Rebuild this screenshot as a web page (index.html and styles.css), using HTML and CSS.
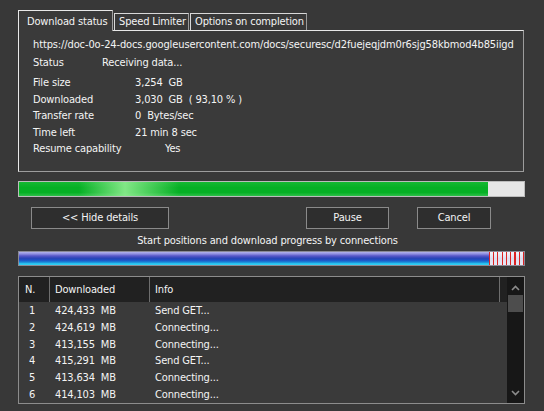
FILE: index.html
```html
<!DOCTYPE html>
<html>
<head>
<meta charset="utf-8">
<link rel="stylesheet" href="styles.css">
</head>
<body>
<div class="win">
  <div class="tabs">
    <div class="tab active">Download status</div>
    <div class="tab">Speed Limiter</div>
    <div class="tab">Options on completion</div>
  </div>
  <div class="panel">
    <div class="url">https://doc-0o-24-docs.googleusercontent.com/docs/securesc/d2fuejeqjdm0r6sjg58kbmod4b85iigd</div>
    <div class="row status"><span class="lbl ls">Status</span><span>Receiving data...</span></div>
    <div class="info">
      <div class="row"><span class="lbl">File size</span><span>3,254&nbsp; GB</span></div>
      <div class="row"><span class="lbl">Downloaded</span><span>3,030&nbsp; GB&nbsp; ( 93,10 % )</span></div>
      <div class="row"><span class="lbl">Transfer rate</span><span>0&nbsp; Bytes/sec</span></div>
      <div class="row"><span class="lbl">Time left</span><span>21 min 8 sec</span></div>
      <div class="row"><span class="lbl lr">Resume capability</span><span>Yes</span></div>
    </div>
  </div>
  <div class="progress"><div class="fill" style="width:469px"></div></div>
  <div class="buttons">
    <div class="btn b-hide">&lt;&lt; Hide details</div>
    <div class="btn b-pause">Pause</div>
    <div class="btn b-cancel">Cancel</div>
  </div>
  <div class="caption">Start positions and download progress by connections</div>
  <div class="conn"><div class="conn-done"></div><div class="conn-rest"></div></div>
  <div class="table">
    <div class="tmain">
      <div class="thead">
        <div class="c1">N.</div><div class="c2">Downloaded</div><div class="c3">Info</div><div class="c4"></div>
      </div>
      <div class="trow"><div class="c1">1</div><div class="c2">424,433&nbsp; MB</div><div class="c3">Send GET...</div></div>
      <div class="trow"><div class="c1">2</div><div class="c2">424,619&nbsp; MB</div><div class="c3">Connecting...</div></div>
      <div class="trow"><div class="c1">3</div><div class="c2">413,155&nbsp; MB</div><div class="c3">Connecting...</div></div>
      <div class="trow"><div class="c1">4</div><div class="c2">415,291&nbsp; MB</div><div class="c3">Send GET...</div></div>
      <div class="trow"><div class="c1">5</div><div class="c2">413,634&nbsp; MB</div><div class="c3">Connecting...</div></div>
      <div class="trow"><div class="c1">6</div><div class="c2">414,103&nbsp; MB</div><div class="c3">Connecting...</div></div>
    </div>
    <div class="sbar">
      <svg class="arr" width="17" height="12" viewBox="0 0 17 12"><path d="M5 8 L8.5 4.5 L12 8" fill="none" stroke="#8c8c8c" stroke-width="1.6"/></svg>
      <div class="thumb"></div>
      <div class="strack"></div>
      <svg class="arr" width="17" height="12" viewBox="0 0 17 12"><path d="M5 4 L8.5 7.5 L12 4" fill="none" stroke="#8c8c8c" stroke-width="1.6"/></svg>
    </div>
  </div>
</div>
</body>
</html>
```

FILE: styles.css
```css
html, body {
  margin: 0;
  padding: 0;
  background: #383838;
}
body {
  font-family: "DejaVu Sans Condensed", "DejaVu Sans", sans-serif;
  font-size: 11px;
  letter-spacing: -0.15px;
  color: #f4f4f4;
}
.win {
  width: 544px;
  height: 411px;
  overflow: hidden;
  padding-top: 10px;
  box-sizing: border-box;
}
.tabs {
  display: flex;
  align-items: flex-end;
  margin-left: 18px;
  height: 20px;
  position: relative;
  z-index: 1;
}
.tab {
  height: 17px;
  line-height: 16px;
  box-sizing: border-box;
  border: 1px solid #d8d8d8;
  border-right-color: #9a9a9a;
  border-bottom: none;
  padding: 0 4px;
  margin-left: 1px;
  background: #383838;
  white-space: nowrap;
}
.tab.active {
  height: 21px;
  line-height: 21px;
  width: 95px;
  margin-left: 0;
  margin-bottom: -1px;
  padding: 0 8px;
  background: #3a3a3a;
  border-color: #e8e8e8;
  border-right-color: #a0a0a0;
}
.tab:nth-child(2) { width: 75px; }
.tab:nth-child(3) { width: 117px; }
.panel {
  margin-left: 18px;
  width: 506px;
  height: 142px;
  box-sizing: border-box;
  border: 1px solid #e8e8e8;
  border-right-color: #9c9c9c;
  border-bottom-color: #9c9c9c;
  background: #3a3a3a;
  padding: 6px 0 0 14px;
}
.url {
  line-height: 16px;
  white-space: nowrap;
  letter-spacing: -0.12px;
}
.row {
  display: flex;
  white-space: nowrap;
}
.status {
  margin-top: 2px;
  line-height: 16px;
}
.info {
  margin-top: 4px;
}
.info .row {
  line-height: 16.5px;
}
.lbl {
  width: 102px;
  flex: none;
}
.lbl.ls { width: 69px; }
.lbl.lr { width: 132px; }
.progress {
  margin: 9px 0 0 18px;
  width: 507px;
  height: 16px;
  box-sizing: border-box;
  border: 1px solid #bcbcbc;
  background: #e6e6e6;
}
.fill {
  height: 100%;
  background:
    linear-gradient(to right, rgba(140,240,140,0) 60px, rgba(150,240,150,0.85) 106px, rgba(140,240,140,0) 160px),
    linear-gradient(to bottom, #16b832 0%, #06b025 40%, #06b025 75%, #2fc04a 100%);
}
.buttons {
  display: flex;
  margin: 10px 0 0 31px;
  height: 22px;
}
.btn {
  box-sizing: border-box;
  height: 22px;
  line-height: 20px;
  border: 1px solid #8a8a8a;
  background: #2e2e2e;
  text-align: center;
}
.b-hide { width: 138px; }
.b-pause { width: 83px; margin-left: 137px; }
.b-cancel { width: 74px; margin-left: 28px; }
.caption {
  margin: 5px 0 0 18px;
  width: 499px;
  text-align: center;
  line-height: 14px;
  white-space: nowrap;
}
.conn {
  margin: 3px 0 0 18px;
  width: 507px;
  height: 15px;
  box-sizing: border-box;
  border: 1px solid #8a8a96;
  display: flex;
}
.conn-done {
  width: 470px;
  height: 100%;
  background: linear-gradient(to bottom, #b4b4ec 0%, #8a8ade 16%, #5858c8 30%, #2a44b6 48%, #1c50c4 62%, #1a86d8 78%, #2cc6f0 90%, #30d0f2 100%);
}
.conn-rest {
  flex: 1;
  height: 100%;
  background:
    repeating-linear-gradient(to right, #dd2222 0 1px, transparent 1px 4.25px),
    linear-gradient(to bottom, #f4f4fa 0%, #dcdcee 50%, #e8e8f4 100%);
}
.table {
  margin: 10px 0 0 18px;
  width: 507px;
  height: 128px;
  box-sizing: border-box;
  border: 1px solid #8c8c8c;
  display: flex;
  background: #3a3a3a;
}
.tmain {
  flex: 1;
}
.thead {
  display: flex;
  height: 25px;
  line-height: 25px;
  background: #212121;
}
.thead > div {
  box-sizing: border-box;
  border-right: 1px solid #6e6e6e;
}
.thead .c4 { border-right: none; flex: 1; }
.c1 { width: 31px; padding-left: 6px; box-sizing: border-box; flex: none; }
.c2 { width: 100px; padding-left: 5px; box-sizing: border-box; flex: none; }
.c3 { width: 350px; padding-left: 5px; box-sizing: border-box; flex: none; }
.trow {
  display: flex;
  height: 16.8px;
  line-height: 16.8px;
  white-space: nowrap;
}
.thead + .trow { margin-top: 1px; }
.trow .c1 { padding-left: 10px; }
.sbar {
  width: 17px;
  background: #171717;
  display: flex;
  flex-direction: column;
}
.arr { display: block; flex: none; margin-top: 5px; }
.sbar .arr:last-child { margin-top: 0; margin-bottom: 4px; }
.thumb {
  margin: 1px 1px 0 1px;
  height: 17px;
  background: #4d4d4d;
}
.strack { flex: 1; }
```
